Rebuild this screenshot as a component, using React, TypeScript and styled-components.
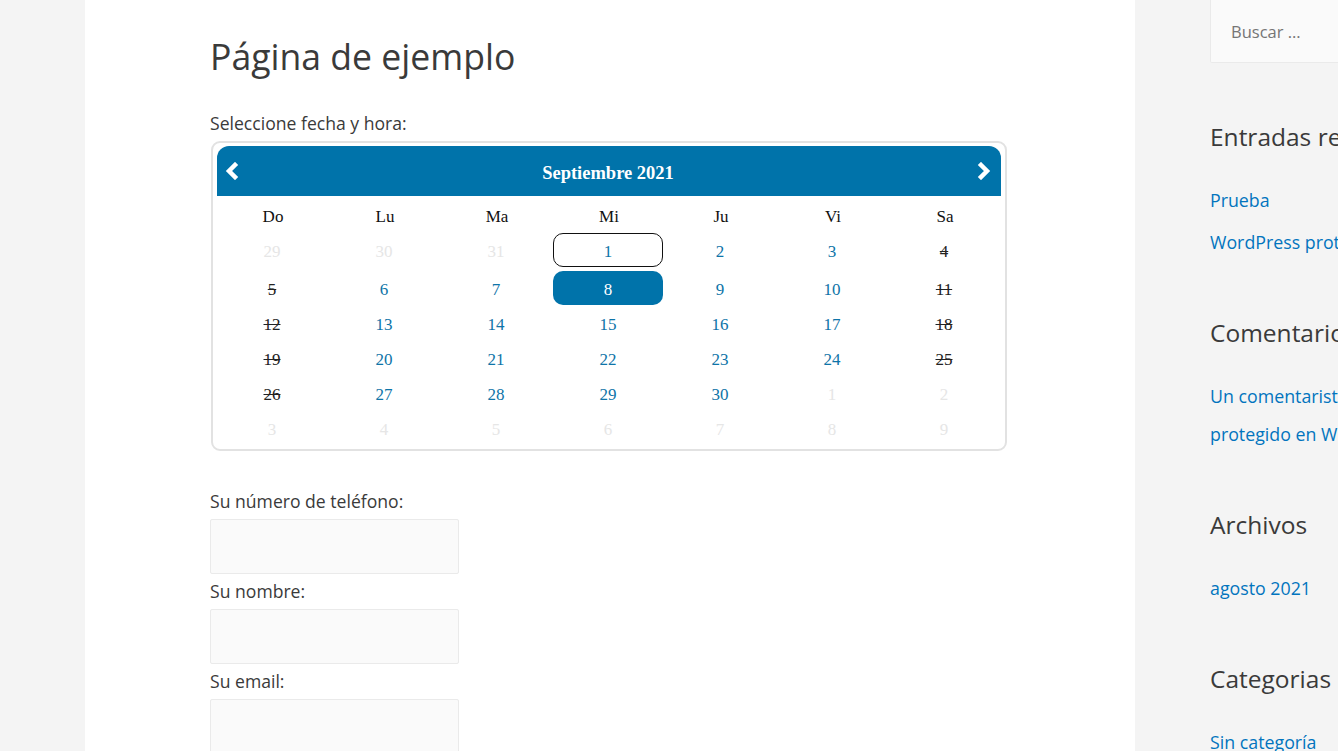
import React from 'react';
import styled, { createGlobalStyle } from 'styled-components';

const GlobalStyle = createGlobalStyle`
  html, body {
    margin: 0;
    padding: 0;
    background: #f4f4f4;
    overflow: hidden;
  }
  body {
    font-family: "Open Sans", "Noto Sans", sans-serif;
    color: #3a3a3a;
  }
`;

const Page = styled.div`
  display: flex;
  width: 1338px;
  height: 751px;
  overflow: hidden;
`;

const Gutter = styled.div`
  width: 85px;
  flex-shrink: 0;
`;

const Main = styled.main`
  width: 1050px;
  flex-shrink: 0;
  background: #fff;
  padding: 32px 0 0 125px;
  box-sizing: border-box;
`;

const Title = styled.h1`
  margin: 0 0 26px;
  font-size: 35.6px;
  font-weight: 400;
  line-height: 48px;
  color: #3a3a3a;
`;

const Label = styled.label`
  display: block;
  font-size: 17.6px;
  line-height: 35px;
  color: #3a3a3a;
`;

const Calendar = styled.div`
  width: 796px;
  box-sizing: border-box;
  margin-left: 1px;
  border: 2px solid #e2e2e2;
  border-radius: 9px;
  padding: 3px 4px 3px;
  margin-bottom: 33px;
  font-family: "Liberation Serif", "Times New Roman", serif;
`;

const CalHeader = styled.div`
  height: 50px;
  background: #0073aa;
  border-radius: 12px 12px 0 0;
  display: flex;
  align-items: center;
  justify-content: space-between;
  padding: 0 8px 0 6px;
  color: #fff;
`;

const MonthTitle = styled.div`
  font-weight: 700;
  font-size: 18.5px;
  padding-top: 5px;
`;

const NavButton = styled.span`
  display: flex;
  width: 18px;
  height: 20px;
  align-items: center;
  justify-content: center;
`;

const Grid = styled.div`
  display: grid;
  grid-template-columns: repeat(7, 112px);
  grid-template-rows: 37px 38px repeat(5, 35px);
`;

const DayName = styled.div`
  display: flex;
  align-items: center;
  justify-content: center;
  padding-top: 4px;
  font-size: 17px;
  color: #111;
`;

const DayCell = styled.div`
  display: flex;
  align-items: flex-start;
`;

type Kind = 'open' | 'off' | 'closed' | 'today' | 'picked';

const Num = styled.span<{ $kind: Kind }>`
  width: 110px;
  height: 34px;
  padding-top: 4px;
  box-sizing: border-box;
  display: flex;
  align-items: center;
  justify-content: center;
  font-size: 17px;
  border-radius: 10px;
  color: ${(p) =>
    p.$kind === 'off' ? '#e6e6e6' : p.$kind === 'closed' ? '#222' : p.$kind === 'picked' ? '#fff' : '#0e74a8'};
  text-decoration: ${(p) => (p.$kind === 'closed' ? 'line-through' : 'none')};
  border: ${(p) => (p.$kind === 'today' ? '1px solid #111' : '1px solid transparent')};
  background: ${(p) => (p.$kind === 'picked' ? '#0073aa' : 'transparent')};
`;

const Input = styled.input`
  display: block;
  width: 249px;
  height: 55px;
  box-sizing: border-box;
  background: #fafafa;
  border: 1px solid #eaeaea;
  border-radius: 2px;
  margin: 0;
`;

const Sidebar = styled.aside`
  padding-left: 75px;
  width: 360px;
  flex-shrink: 0;
  box-sizing: border-box;
`;

const Search = styled.div`
  height: 63px;
  box-sizing: border-box;
  background: #fafafa;
  border: 1px solid #eaeaea;
  border-top: none;
  border-radius: 0 0 2px 2px;
  display: flex;
  align-items: center;
  padding: 0 20px 0;
  font-size: 16.5px;
  color: #757575;
  margin-bottom: 54px;
`;

const Widget = styled.section`
  margin-bottom: 52px;
`;

const WidgetTitle = styled.h2`
  margin: 0 0 24px;
  font-size: 24.5px;
  font-weight: 400;
  line-height: 40px;
  color: #3a3a3a;
  white-space: nowrap;
`;

const LinkList = styled.ul`
  list-style: none;
  margin: 0;
  padding: 0;
  display: flex;
  flex-direction: column;
  gap: 4px;
`;

const LinkItem = styled.li`
  font-size: 17.8px;
  line-height: 38px;
  color: #0274be;
`;

const Chevron = ({ dir }: { dir: 'left' | 'right' }) => (
  <svg width="16" height="18" viewBox="0 0 16 18">
    <polyline
      points={dir === 'left' ? '11,3 5,9 11,15' : '5,3 11,9 5,15'}
      fill="none"
      stroke="#fff"
      strokeWidth="4.5"
      strokeLinecap="square"
    />
  </svg>
);

const dayNames = ['Do', 'Lu', 'Ma', 'Mi', 'Ju', 'Vi', 'Sa'];

const closedDays = [4, 5, 11, 12, 18, 19, 25, 26];

const buildDays = () => {
  const cells: { n: number; kind: Kind }[] = [];
  [29, 30, 31].forEach((n) => cells.push({ n, kind: 'off' }));
  for (let d = 1; d <= 30; d++) {
    let kind: Kind = 'open';
    if (closedDays.includes(d)) kind = 'closed';
    if (d === 1) kind = 'today';
    if (d === 8) kind = 'picked';
    cells.push({ n: d, kind });
  }
  for (let d = 1; d <= 9; d++) cells.push({ n: d, kind: 'off' });
  return cells;
};

export default function App() {
  const days = buildDays();
  return (
    <>
      <GlobalStyle />
      <Page>
        <Gutter />
        <Main>
          <Title>Página de ejemplo</Title>
          <Label>Seleccione fecha y hora:</Label>
          <Calendar>
            <CalHeader>
              <NavButton>
                <Chevron dir="left" />
              </NavButton>
              <MonthTitle>Septiembre 2021</MonthTitle>
              <NavButton>
                <Chevron dir="right" />
              </NavButton>
            </CalHeader>
            <Grid>
              {dayNames.map((d) => (
                <DayName key={d}>{d}</DayName>
              ))}
              {days.map((c, i) => (
                <DayCell key={i}>
                  <Num $kind={c.kind}>{c.n}</Num>
                </DayCell>
              ))}
            </Grid>
          </Calendar>
          <Label>Su número de teléfono:</Label>
          <Input type="tel" />
          <Label>Su nombre:</Label>
          <Input type="text" />
          <Label>Su email:</Label>
          <Input type="email" />
        </Main>
        <Sidebar>
          <Search>Buscar …</Search>
          <Widget>
            <WidgetTitle>Entradas recientes</WidgetTitle>
            <LinkList>
              <LinkItem>Prueba</LinkItem>
              <LinkItem>WordPress protegido</LinkItem>
            </LinkList>
          </Widget>
          <Widget>
            <WidgetTitle>Comentarios recientes</WidgetTitle>
            <LinkList>
              <LinkItem>
                Un comentarista de WordPress en
                <br />
                protegido en WordPress
              </LinkItem>
            </LinkList>
          </Widget>
          <Widget>
            <WidgetTitle>Archivos</WidgetTitle>
            <LinkList>
              <LinkItem>agosto 2021</LinkItem>
            </LinkList>
          </Widget>
          <Widget>
            <WidgetTitle>Categorias</WidgetTitle>
            <LinkList>
              <LinkItem>Sin categoría</LinkItem>
            </LinkList>
          </Widget>
        </Sidebar>
      </Page>
    </>
  );
}
